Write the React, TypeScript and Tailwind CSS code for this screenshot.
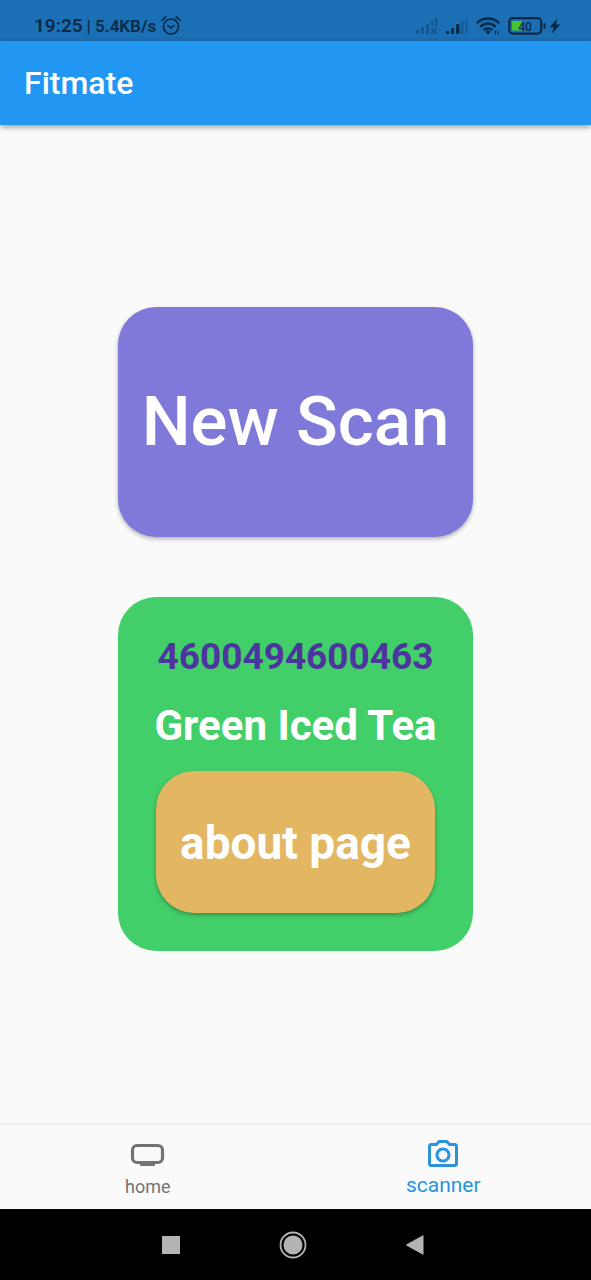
import { useState } from "react";

function AlarmIcon() {
  return (
    <svg width="20" height="20" viewBox="0 0 20 20" fill="none" stroke="currentColor" strokeWidth="1.7" strokeLinecap="round" aria-hidden="true">
      <circle cx="10" cy="10.500" r="7.500" />
      <path d="M1 4.200 4.800 1M19 4.200 15.200 1M7 9.600l3 2.300 3-2.300" />
    </svg>
  );
}

function NoSignalIcon() {
  return (
    <svg width="22" height="16" viewBox="0 0 22 16" fill="currentColor" opacity="0.35" aria-hidden="true">
      <rect x="0" y="12" width="3" height="4" rx="1" />
      <rect x="5" y="9" width="3" height="7" rx="1" />
      <rect x="10" y="6" width="3" height="10" rx="1" />
      <rect x="15" y="2" width="2.500" height="6" rx="1" />
      <rect x="19" y="0" width="2.500" height="8" rx="1" />
      <path d="m15 10 6 6m0-6-6 6" stroke="currentColor" strokeWidth="1.8" />
    </svg>
  );
}

function SignalIcon() {
  return (
    <svg width="22" height="16" viewBox="0 0 22 16" fill="currentColor" aria-hidden="true">
      <rect x="0" y="13" width="3" height="3" rx="1" />
      <rect x="5" y="10" width="3" height="6" rx="1" />
      <rect x="10" y="6" width="3.500" height="10" rx="1" />
      <rect x="15" y="3" width="2.500" height="13" rx="1" opacity="0.35" />
      <rect x="19.500" y="0" width="2.500" height="16" rx="1" opacity="0.25" />
    </svg>
  );
}

function WifiIcon() {
  return (
    <svg width="24" height="20" viewBox="0 0 24 20" fill="none" stroke="currentColor" strokeWidth="2.5" aria-hidden="true">
      <path d="M.8 7.200C7 .8 17 .8 23.200 7.200M4.300 10.800c4.300-4.300 11.100-4.300 15.400 0M7.700 14.200c2.400-2.400 6.200-2.400 8.600 0" />
      <path d="M12 18.500 9.300 15.800a3.800 3.800 0 0 1 5.400 0z" fill="currentColor" stroke="none" />
      <path d="m20 14-2 2.500h1.200V19H20zM21.500 19l2-2.500h-1.200V14h-.8z" fill="currentColor" stroke="none" />
    </svg>
  );
}

function BatteryIcon() {
  return (
    <svg width="38" height="18" viewBox="0 0 38 18" aria-hidden="true">
      <rect x="1.200" y="1.200" width="32" height="15.400" rx="3.500" fill="none" stroke="currentColor" strokeWidth="2.200" />
      <rect x="4" y="4" width="10" height="9.500" rx="1" fill="#45c62b" />
      <rect x="35.500" y="6" width="2" height="6" rx="1" fill="currentColor" />
      <text x="17" y="13.500" textAnchor="middle" fill="currentColor" fontFamily="Roboto, sans-serif" fontSize="12" fontWeight="500">40</text>
    </svg>
  );
}

function BoltIcon() {
  return (
    <svg width="12" height="16" viewBox="0 0 12 16" fill="currentColor" aria-hidden="true">
      <path d="M8.500.5.500 9.200h4.200L2.800 15.500 11.500 6.500H7z" />
    </svg>
  );
}

function HomeIcon() {
  return (
    <svg width="36" height="36" viewBox="0 0 36 36" aria-hidden="true">
      <rect x="2.500" y="8.500" width="30" height="17" rx="4.500" fill="none" stroke="currentColor" strokeWidth="3.200" />
      <rect x="10" y="25" width="15" height="4" rx="1" fill="currentColor" />
    </svg>
  );
}

function CameraIcon() {
  return (
    <svg width="36" height="36" viewBox="0 0 24 24" fill="currentColor" aria-hidden="true">
      <path d="M14.120 4l1.830 2H20v12H4V6h4.050l1.830-2h4.240M15 2H9L7.170 4H4c-1.100 0-2 .9-2 2v12c0 1.100.9 2 2 2h16c1.100 0 2-.9 2-2V6c0-1.100-.9-2-2-2h-3.170L15 2zm-3 5c-2.760 0-5 2.240-5 5s2.240 5 5 5 5-2.240 5-5-2.240-5-5-5zm0 2c1.650 0 3 1.350 3 3s-1.350 3-3 3-3-1.350-3-3 1.350-3 3-3z" />
    </svg>
  );
}

function StatusBar() {
  return (
    <div className="flex h-[41px] items-center justify-between bg-[#1b6fb5] pt-[11px] pr-[30px] pl-[34px] text-[#0b2a47]">
      <div className="flex items-center gap-1 whitespace-nowrap">
        <span className="text-[19px] leading-5 font-semibold">19:25</span>
        <span className="mr-px text-[17px] leading-5 font-semibold">| 5.4KB/s</span>
        <AlarmIcon />
      </div>
      <div className="flex items-center gap-2">
        <NoSignalIcon />
        <SignalIcon />
        <WifiIcon />
        <div className="flex items-center gap-[3px]">
          <BatteryIcon />
          <BoltIcon />
        </div>
      </div>
    </div>
  );
}

export default function App() {
  const [tab, setTab] = useState("scanner");

  return (
    <div className="flex min-h-screen flex-col bg-[#fafafa] font-[Roboto,sans-serif]">
      <StatusBar />
      <header className="flex h-[84px] items-center bg-[#2196f3] px-6 shadow-[0_2px_6px_rgba(0,0,0,0.4)]">
        <h1 className="text-[32px] leading-9 font-medium text-white">Fitmate</h1>
      </header>

      <main className="flex grow flex-col items-center justify-center gap-[60px] pt-[9px]">
        <button
          type="button"
          className="h-[230px] w-3/5 rounded-[38px] bg-[#7f7ada] text-[69px] font-medium whitespace-nowrap text-white shadow-[0_2px_4px_rgba(0,0,0,0.3)]"
        >
          New Scan
        </button>
        <section className="flex w-3/5 flex-col items-center rounded-[38px] bg-[#42cf6a] p-[38px] font-bold whitespace-nowrap">
          <p className="text-[37px] leading-[44px] text-[#4d35a0]">4600494600463</p>
          <h2 className="mt-[22px] text-[42px] leading-[50px] text-white">Green Iced Tea</h2>
          <button
            type="button"
            className="mt-5 h-[142px] w-full rounded-[38px] bg-[#e3b661] pt-1 text-[46px] text-white shadow-[0_2px_4px_rgba(0,0,0,0.3)]"
          >
            about page
          </button>
        </section>
      </main>

      <nav className="grid h-[86px] grid-cols-2 border-t-2 border-[#f0f0f0]">
        <button type="button" onClick={() => setTab("home")} aria-pressed={tab === "home"} className="flex flex-col items-center pt-3 text-[#737373]">
          <HomeIcon />
          <span className="mt-0.5 text-[18px] leading-6">home</span>
        </button>
        <button type="button" onClick={() => setTab("scanner")} aria-pressed={tab === "scanner"} className="flex flex-col items-center pt-3 text-[#2b93dc]">
          <CameraIcon />
          <span className="text-[21px] leading-6">scanner</span>
        </button>
      </nav>

      <div className="flex h-[71px] items-center justify-between bg-black pr-[167px] pl-[162px] text-[#b4b4b4]">
        <button type="button" aria-label="Recent apps">
          <svg width="18" height="18" viewBox="0 0 18 18" fill="currentColor"><rect width="18" height="18" /></svg>
        </button>
        <button type="button" aria-label="Home screen">
          <svg width="28" height="28" viewBox="0 0 28 28">
            <circle cx="14" cy="14" r="12.500" fill="none" stroke="currentColor" strokeWidth="1.800" />
            <circle cx="14" cy="14" r="9.500" fill="currentColor" />
          </svg>
        </button>
        <button type="button" aria-label="Back">
          <svg width="18" height="20" viewBox="0 0 18 20" fill="currentColor"><path d="M17.500 1v18a.6.6 0 0 1-.9.500L.8 10.700a.8.8 0 0 1 0-1.400L16.600.5a.6.6 0 0 1 .9.500z" /></svg>
        </button>
      </div>
    </div>
  );
}
